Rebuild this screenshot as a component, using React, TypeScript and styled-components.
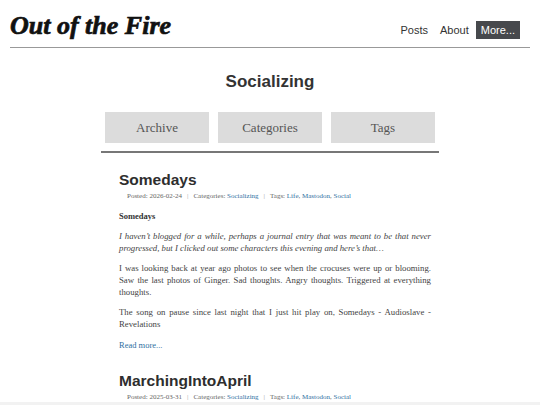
import React from "react";
import styled, { createGlobalStyle } from "styled-components";

const Global = createGlobalStyle`
  html, body {
    margin: 0;
    padding: 0;
    background: #ffffff;
    overflow: hidden;
  }
  body {
    font-family: "Liberation Serif", "Times New Roman", serif;
    color: #444;
  }
  a {
    color: #2f6f9f;
    text-decoration: none;
  }
`;

type Post = {
  title: string;
  date: string;
  lead?: string;
  intro?: string;
  paragraphs?: string[];
};

const posts: Post[] = [
  {
    title: "Somedays",
    date: "2026-02-24",
    lead: "Somedays",
    intro:
      "I haven\u2019t blogged for a while, perhaps a journal entry that was meant to be that never progressed, but I clicked out some characters this evening and here\u2019s that\u2026",
    paragraphs: [
      "I was looking back at year ago photos to see when the crocuses were up or blooming. Saw the last photos of Ginger. Sad thoughts. Angry thoughts. Triggered at everything thoughts.",
      "The song on pause since last night that I just hit play on, Somedays - Audioslave - Revelations",
    ],
  },
  {
    title: "MarchingIntoApril",
    date: "2025-03-31",
  },
];

export default function App() {
  return (
    <>
      <Global />
      <Page>
        <Header>
          <SiteTitle>Out of the Fire</SiteTitle>
          <Nav>
            <NavLink href="#">Posts</NavLink>
            <NavLink href="#">About</NavLink>
            <NavLink href="#" $active>
              More...
            </NavLink>
          </Nav>
        </Header>

        <Main>
          <PageTitle>Socializing</PageTitle>
          <Tabs>
            <Tab>Archive</Tab>
            <Tab>Categories</Tab>
            <Tab>Tags</Tab>
          </Tabs>

          <Posts>
            {posts.map((p) => (
              <Article key={p.title}>
                <PostTitle>{p.title}</PostTitle>
                <Meta>
                  Posted: {p.date}
                  <Sep>|</Sep>
                  Categories: <a href="#">Socializing</a>
                  <Sep>|</Sep>
                  Tags: <a href="#">Life</a>, <a href="#">Mastodon</a>,{" "}
                  <a href="#">Social</a>
                </Meta>
                {p.lead && <Lead>{p.lead}</Lead>}
                {p.intro && <Intro>{p.intro}</Intro>}
                {p.paragraphs?.map((t, i) => (
                  <Para key={i}>{t}</Para>
                ))}
                {p.lead && <ReadMore href="#">Read more...</ReadMore>}
              </Article>
            ))}
          </Posts>
        </Main>
      </Page>
      <BottomBar />
    </>
  );
}

const Page = styled.div`
  width: 540px;
`;

const Header = styled.header`
  margin: 0 10px;
  height: 48px;
  border-bottom: 1px solid #999;
  display: flex;
  align-items: flex-end;
  justify-content: space-between;
  box-sizing: border-box;
  padding-bottom: 6px;
`;

const SiteTitle = styled.h1`
  margin: 0;
  font-family: "Liberation Serif", "Times New Roman", serif;
  font-style: italic;
  font-weight: 700;
  font-size: 26px;
  line-height: 30px;
  color: #111;
  -webkit-text-stroke: 0.7px #111;
`;

const Nav = styled.nav`
  display: flex;
  align-items: center;
  gap: 2px;
  padding-right: 10px;
  padding-bottom: 2px;
`;

const NavLink = styled.a<{ $active?: boolean }>`
  font-family: "Liberation Sans", Arial, sans-serif;
  font-size: 11px;
  line-height: 18px;
  padding: 0 5px;
  color: ${(p) => (p.$active ? "#ffffff" : "#333")};
  background: ${(p) => (p.$active ? "#47494d" : "transparent")};
`;

const Main = styled.main`
  width: 338px;
  margin: 0 auto;
`;

const PageTitle = styled.h2`
  margin: 0;
  padding-top: 24px;
  text-align: center;
  font-family: "Liberation Sans", Arial, sans-serif;
  font-weight: bold;
  font-size: 17px;
  line-height: 20px;
  color: #333;
`;

const Tabs = styled.div`
  display: grid;
  grid-template-columns: repeat(3, 1fr);
  gap: 9px;
  padding: 0 4px 8px;
  margin-top: 20px;
  border-bottom: 2px solid #777;
`;

const Tab = styled.div`
  background: #dcdcdc;
  height: 31px;
  display: flex;
  align-items: center;
  justify-content: center;
  font-size: 13px;
  color: #555;
`;

const Posts = styled.div`
  padding: 17px 8px 0 18px;
`;

const Article = styled.article`
  margin-bottom: 20px;
`;

const PostTitle = styled.h3`
  margin: 0;
  font-family: "Liberation Sans", Arial, sans-serif;
  font-weight: bold;
  font-size: 15.5px;
  line-height: 20px;
  color: #2e2e2e;
`;

const Meta = styled.div`
  padding-left: 8px;
  font-size: 7px;
  line-height: 12px;
  color: #666;
`;

const Sep = styled.span`
  margin: 0 5px;
  color: #999;
`;

const Lead = styled.p`
  margin: 8px 0 0;
  font-weight: bold;
  font-size: 8.5px;
  line-height: 12px;
  color: #333;
`;

const Para = styled.p`
  margin: 8px 0 0;
  font-size: 8.75px;
  line-height: 12px;
  text-align: justify;
  color: #444;
`;

const Intro = styled(Para)`
  font-style: italic;
`;

const ReadMore = styled.a`
  display: block;
  margin-top: 9px;
  font-size: 8.5px;
  line-height: 12px;
`;

const BottomBar = styled.div`
  position: fixed;
  left: 0;
  right: 0;
  bottom: 0;
  height: 3px;
  background: #f2f2f2;
`;
